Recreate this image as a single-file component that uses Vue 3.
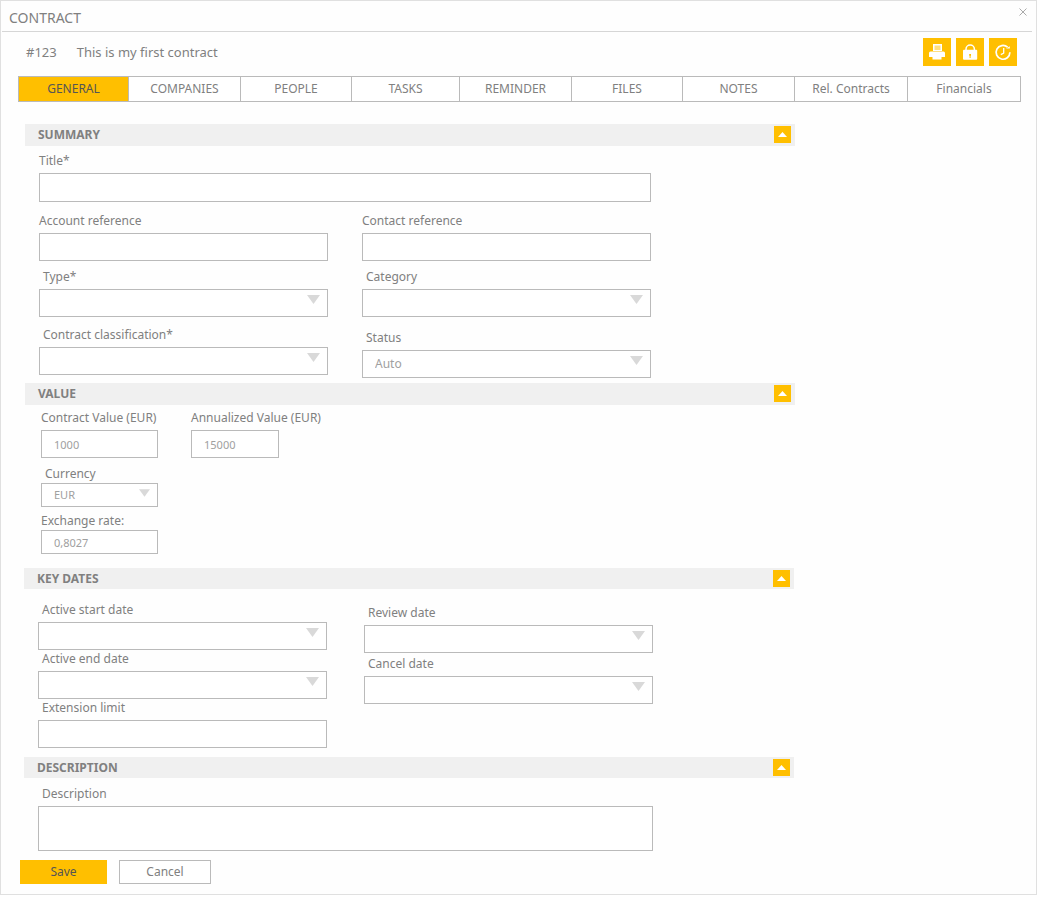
<script setup>
import { ref, reactive } from 'vue'

const tabs = ['GENERAL', 'COMPANIES', 'PEOPLE', 'TASKS', 'REMINDER', 'FILES', 'NOTES', 'Rel. Contracts', 'Financials']
const activeTab = ref('GENERAL')
const open = reactive({ summary: true, value: true, dates: true, description: true })
const form = reactive({
  title: '', account: '', contact: '', extension: '', description: '',
  contractValue: '1000', annualValue: '15000', exchange: '0,8027',
})
</script>

<template>
  <main class="dialog">
    <header class="titlebar">
      <h1>CONTRACT</h1>
      <button type="button" class="close" aria-label="Close">
        <svg width="8" height="8" viewBox="0 0 8 8"><path d="M0.5 0.5L7.5 7.5M7.5 0.5L0.5 7.5" /></svg>
      </button>
    </header>

    <div class="subject">
      <span>#123</span>
      <span class="name">This is my first contract</span>
      <div class="tools">
        <button type="button" aria-label="Print">
          <svg width="28" height="28" viewBox="0 0 28 28">
            <rect x="10" y="6" width="9" height="7" fill="#fff" />
            <rect x="11.5" y="7.5" width="6" height="4.500" fill="#ffdf80" />
            <path d="M7.500 13.500h13a1.500 1.500 0 0 1 1.500 1.500v4H6v-4a1.500 1.500 0 0 1 1.500-1.500z" fill="#fff" />
            <rect x="9.500" y="19" width="9" height="2.500" fill="#fff" />
          </svg>
        </button>
        <button type="button" aria-label="Lock">
          <svg width="28" height="28" viewBox="0 0 28 28">
            <path d="M10 12.500v-1.300a4.200 4.200 0 0 1 8.400 0v1.300" fill="none" stroke="#fff" stroke-width="1.500" />
            <path d="M8 11.700h12.200a1 1 0 0 1 1 1v8a1 1 0 0 1-1 1H8a1 1 0 0 1-1-1v-8a1 1 0 0 1 1-1z" fill="#fff" />
            <path d="M13.200 16h1.800v1.500l-.4.500v2h-1v-2l-.4-.5z" fill="#ffbf00" />
          </svg>
        </button>
        <button type="button" aria-label="History">
          <svg width="28" height="28" viewBox="0 0 28 28">
            <path d="M18.600 9.200A6.900 6.900 0 1 0 20.900 14.300" fill="none" stroke="#fff" stroke-width="1.700" />
            <path d="M17 10.600h3.800V8.200z" fill="#fff" />
            <path d="M14.700 10v5.200M15 15l-3.200 1.600" fill="none" stroke="#fff" stroke-width="1.300" />
          </svg>
        </button>
      </div>
    </div>

    <nav class="tabs" aria-label="Contract sections">
      <button
        v-for="tab in tabs" :key="tab" type="button"
        :class="{ active: tab === activeTab }" @click="activeTab = tab"
      >{{ tab }}</button>
    </nav>

    <form class="body" @submit.prevent>
      <section class="upper">
        <div class="bar">
          <h2>SUMMARY</h2>
          <button type="button" aria-label="Toggle summary" @click="open.summary = !open.summary">
            <svg width="9" height="5" viewBox="0 0 9 5"><path d="M4.500 0L9 5H0z" /></svg>
          </button>
        </div>
        <div v-show="open.summary" class="content summary">
          <div class="field title">
            <label for="title">Title*</label>
            <input id="title" v-model="form.title" type="text">
          </div>
          <div class="row spread">
            <div class="field">
              <label for="account">Account reference</label>
              <input id="account" v-model="form.account" type="text">
            </div>
            <div class="field">
              <label for="contact">Contact reference</label>
              <input id="contact" v-model="form.contact" type="text">
            </div>
          </div>
          <div class="row">
            <div class="field inset">
              <label for="type">Type*</label>
              <div class="picker">
                <select id="type"><option></option></select>
                <svg width="13" height="9" viewBox="0 0 13 9"><path d="M0 0H13L6.500 9z" /></svg>
              </div>
            </div>
            <div class="field inset">
              <label for="category">Category</label>
              <div class="picker">
                <select id="category"><option></option></select>
                <svg width="13" height="9" viewBox="0 0 13 9"><path d="M0 0H13L6.500 9z" /></svg>
              </div>
            </div>
          </div>
          <div class="row last">
            <div class="field inset">
              <label for="classification">Contract classification*</label>
              <div class="picker">
                <select id="classification"><option></option></select>
                <svg width="13" height="9" viewBox="0 0 13 9"><path d="M0 0H13L6.500 9z" /></svg>
              </div>
            </div>
            <div class="field inset lowered">
              <label for="status">Status</label>
              <div class="picker">
                <select id="status"><option>Auto</option></select>
                <svg width="13" height="9" viewBox="0 0 13 9"><path d="M0 0H13L6.500 9z" /></svg>
              </div>
            </div>
          </div>
        </div>
      </section>

      <section class="upper">
        <div class="bar">
          <h2>VALUE</h2>
          <button type="button" aria-label="Toggle value" @click="open.value = !open.value">
            <svg width="9" height="5" viewBox="0 0 9 5"><path d="M4.500 0L9 5H0z" /></svg>
          </button>
        </div>
        <div v-show="open.value" class="content value">
          <div class="amounts">
            <div class="field">
              <label for="contract-value">Contract Value (EUR)</label>
              <input id="contract-value" v-model="form.contractValue" type="text">
            </div>
            <div class="field annual">
              <label for="annual-value">Annualized Value (EUR)</label>
              <input id="annual-value" v-model="form.annualValue" type="text">
            </div>
          </div>
          <div class="field inset compact">
            <label for="currency">Currency</label>
            <div class="picker">
              <select id="currency"><option>EUR</option></select>
              <svg width="11" height="8" viewBox="0 0 13 9"><path d="M0 0H13L6.500 9z" /></svg>
            </div>
          </div>
          <div class="field compact">
            <label for="exchange">Exchange rate:</label>
            <input id="exchange" v-model="form.exchange" type="text">
          </div>
        </div>
      </section>

      <section class="lower">
        <div class="bar">
          <h2>KEY DATES</h2>
          <button type="button" aria-label="Toggle key dates" @click="open.dates = !open.dates">
            <svg width="9" height="5" viewBox="0 0 9 5"><path d="M4.500 0L9 5H0z" /></svg>
          </button>
        </div>
        <div v-show="open.dates" class="content dates">
          <div class="column">
            <div class="field inset">
              <label for="start">Active start date</label>
              <div class="picker">
                <select id="start"><option></option></select>
                <svg width="13" height="9" viewBox="0 0 13 9"><path d="M0 0H13L6.500 9z" /></svg>
              </div>
            </div>
            <div class="field inset">
              <label for="end">Active end date</label>
              <div class="picker">
                <select id="end"><option></option></select>
                <svg width="13" height="9" viewBox="0 0 13 9"><path d="M0 0H13L6.500 9z" /></svg>
              </div>
            </div>
            <div class="field inset">
              <label for="extension">Extension limit</label>
              <input id="extension" v-model="form.extension" type="text">
            </div>
          </div>
          <div class="column lowered">
            <div class="field inset">
              <label for="review">Review date</label>
              <div class="picker">
                <select id="review"><option></option></select>
                <svg width="13" height="9" viewBox="0 0 13 9"><path d="M0 0H13L6.500 9z" /></svg>
              </div>
            </div>
            <div class="field inset">
              <label for="cancel-date">Cancel date</label>
              <div class="picker">
                <select id="cancel-date"><option></option></select>
                <svg width="13" height="9" viewBox="0 0 13 9"><path d="M0 0H13L6.500 9z" /></svg>
              </div>
            </div>
          </div>
        </div>
      </section>

      <section class="lower">
        <div class="bar">
          <h2>DESCRIPTION</h2>
          <button type="button" aria-label="Toggle description" @click="open.description = !open.description">
            <svg width="9" height="5" viewBox="0 0 9 5"><path d="M4.500 0L9 5H0z" /></svg>
          </button>
        </div>
        <div v-show="open.description" class="content description">
          <div class="field inset">
            <label for="description">Description</label>
            <textarea id="description" v-model="form.description"></textarea>
          </div>
        </div>
      </section>

      <div class="actions">
        <button type="submit" class="save">Save</button>
        <button type="button">Cancel</button>
      </div>
    </form>
  </main>
</template>

<style>
body {
  background: #fff;
}
</style>

<style scoped>
* {
  box-sizing: border-box;
}

.dialog {
  margin-right: 1px;
  padding-bottom: 10px;
  border: 1px solid #e0e0e0;
  background: #fefefe;
  color: #808080;
  font: 12px/16px "Noto Sans", sans-serif;
}

button,
input,
select,
textarea {
  margin: 0;
  padding: 0;
  border: 1px solid #bababa;
  border-radius: 0;
  background: #fff;
  color: inherit;
  font: inherit;
}

button {
  cursor: pointer;
}

svg {
  display: block;
}

h1,
h2 {
  margin: 0;
}

.titlebar {
  display: flex;
  justify-content: space-between;
  align-items: flex-start;
  margin: 0 4px 0 1px;
  border-bottom: 1px solid #d6d6d6;
}

h1 {
  padding: 7px 7px 3px;
  font-size: 14px;
  font-weight: 400;
  line-height: 20px;
}

.close {
  padding: 7px 5px;
  border: 0;
  background: none;
}

.close path {
  fill: none;
  stroke: #aaa;
}

.subject {
  display: flex;
  align-items: center;
  padding: 6px 19px 0 25px;
  font-size: 13px;
}

.name {
  margin-left: 20px;
}

.tools {
  display: flex;
  gap: 5px;
  margin-left: auto;
}

.tools button {
  border: 0;
  background: #ffbf00;
}

.tabs {
  display: grid;
  grid-template-columns: 109fr 112fr 111fr 108fr 112fr 111fr 112fr 113fr 113fr;
  margin: 10px 15px 0 17px;
  border: 1px solid #bababa;
}

.tabs button {
  height: 24px;
  border-width: 0 0 0 1px;
}

.tabs button:first-child {
  border-left: 0;
}

.tabs .active {
  background: #ffbf00;
  color: #555;
}

.body {
  padding: 22px 24px 0 23px;
}

section {
  max-width: 770px;
}

.upper {
  margin-left: 1px;
}

.bar {
  display: flex;
  justify-content: space-between;
  align-items: flex-start;
  height: 22px;
  padding: 2px 4px 0 13px;
  background: #f0f0f0;
}

.lower .bar {
  height: 21px;
}

h2 {
  font-size: 12px;
  font-weight: 700;
  line-height: 17px;
}

.bar button {
  display: grid;
  place-items: center;
  width: 17px;
  height: 17px;
  border: 0;
  background: #ffbf00;
}

.bar path {
  fill: #fff;
}

.content {
  max-width: 638px;
  padding: 0 12px 0 14px;
}

.lower .content {
  max-width: 641px;
}

.row,
.dates {
  display: grid;
  grid-template-columns: 1fr 1fr;
  column-gap: 34px;
}

.dates {
  column-gap: 37px;
}

.field {
  display: grid;
  align-content: start;
  row-gap: 4px;
}

.field label {
  white-space: nowrap;
}

.inset label {
  padding-left: 4px;
}

.field input,
.field select {
  width: 100%;
  height: 28px;
  padding: 0 12px;
}

.field select {
  appearance: none;
}

.picker {
  display: grid;
}

.picker select,
.picker svg {
  grid-area: 1 / 1;
}

.picker svg {
  justify-self: end;
  margin: 6px 8px;
  pointer-events: none;
}

.picker path {
  fill: #d9d9d9;
}

.picker select,
.value input {
  color: #a0a0a0;
}

.lowered {
  padding-top: 3px;
}

.summary {
  padding-top: 7px;
  padding-bottom: 5px;
}

.title input {
  height: 29px;
}

.row {
  margin-top: 8px;
}

.spread {
  margin-top: 11px;
}

.last {
  margin-top: 10px;
}

.value {
  padding: 5px 12px 14px 16px;
}

.value input,
.value select {
  font-size: 11px;
}

.amounts {
  display: flex;
  gap: 33px;
  margin-bottom: 8px;
}

.amounts .field,
.compact {
  width: 117px;
}

.annual input {
  width: 88px;
}

.compact {
  row-gap: 1px;
}

.compact + .compact {
  margin-top: 6px;
}

.compact input,
.compact select {
  height: 24px;
}

.dates {
  padding-top: 13px;
  padding-bottom: 9px;
}

.column {
  display: grid;
  align-content: start;
  row-gap: 1px;
}

.column.lowered {
  row-gap: 3px;
}

.description {
  padding-top: 8px;
}

.field textarea {
  display: block;
  width: 100%;
  height: 45px;
  padding: 4px 12px;
  resize: none;
}

.actions {
  display: flex;
  gap: 12px;
  margin: 9px 0 0 -4px;
}

.actions button {
  width: 92px;
  height: 24px;
}

.actions .save {
  width: 87px;
  border: 0;
  background: #ffbf00;
  color: #555;
}
</style>
